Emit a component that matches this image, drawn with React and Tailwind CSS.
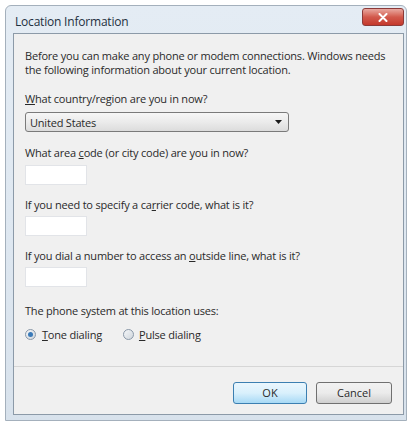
import React from "react";

const font = { fontFamily: '"Open Sans", "Noto Sans", sans-serif' };

function Label({ children, className = "" }) {
  return <div className={"text-[11px] leading-[13px] tracking-[-0.2px] text-[#2a2a2a] whitespace-nowrap " + className}>{children}</div>;
}

function Field({ className = "" }) {
  return <div className={"w-[62px] h-[20px] bg-white border border-[#e2e4e8] " + className} />;
}

function Radio({ checked }) {
  return (
    <div className="w-[11px] h-[11px] rounded-full border border-[#8a98a8] bg-gradient-to-br from-[#f4f6f8] to-[#d0d6dc] flex items-center justify-center">
      {checked && <div className="w-[5px] h-[5px] rounded-full bg-[#3a7ab8]" />}
    </div>
  );
}

export default function App() {
  return (
    <div className="w-[412px] h-[423px] bg-white pt-[5px] pl-[5px]" style={font}>
      <div className="w-[402px] h-[416px] rounded-t-[6px] border border-[#a4b0bc] bg-gradient-to-b from-[#e4ecf4] via-[#dfe8f1] to-[#d8e2ec] flex flex-col">
        <div className="h-[27px] flex items-start justify-between">
          <div className="pl-[9px] pt-[9px] text-[12px] leading-[14px] tracking-[-0.2px] text-[#1e3040] whitespace-nowrap">Location Information</div>
          <div className="mr-[2px] mt-[2px] w-[42px] h-[18px] rounded-[3px] border border-[#8c3a38] bg-gradient-to-b from-[#e8a8a0] via-[#d2594c] to-[#c4382c] flex items-center justify-center">
            <svg width="10" height="9" viewBox="0 0 10 9">
              <path d="M1.5 1 L8.5 8 M8.5 1 L1.5 8" stroke="#ffffff" strokeWidth="2" strokeLinecap="round" />
            </svg>
          </div>
        </div>
        <div className="ml-[7px] mr-[2px] flex-1 mb-[5px] border border-[#8c9aa8] bg-[#f0f0f0] flex flex-col">
          <div className="pl-[11px] pt-[15px] flex flex-col">
            <Label>Before you can make any phone or modem connections. Windows needs</Label>
            <Label className="mt-[1px]">the following information about your current location.</Label>
            <Label className="mt-[16px]"><span className="underline">W</span>hat country/region are you in now?</Label>
            <div className="mt-[7px] w-[264px] h-[20px] rounded-[3px] border border-[#7a7a7a] bg-gradient-to-b from-[#f6f6f6] via-[#ebebeb] to-[#dcdcdc] flex items-center justify-between pl-[4px] pr-[6px]">
              <span className="text-[11px] leading-[13px] tracking-[-0.2px] text-[#2a2a2a]">United States</span>
              <svg width="7" height="4" viewBox="0 0 7 4"><path d="M0 0 H7 L3.5 4 Z" fill="#1a1a1a" /></svg>
            </div>
            <Label className="mt-[14px]">What area <span className="underline">c</span>ode (or city code) are you in now?</Label>
            <Field className="mt-[6px]" />
            <Label className="mt-[13px]">If you need to specify a ca<span className="underline">r</span>rier code, what is it?</Label>
            <Field className="mt-[5px]" />
            <Label className="mt-[13px]">If you dial a number to access an <span className="underline">o</span>utside line, what is it?</Label>
            <Field className="mt-[5px]" />
            <Label className="mt-[17px]">The phone system at this location uses:</Label>
            <div className="mt-[11px] flex items-center h-[13px]">
              <Radio checked />
              <span className="ml-[6px] text-[11px] leading-[13px] tracking-[-0.2px] text-[#2a2a2a]"><span className="underline">T</span>one dialing</span>
              <div className="ml-[21px]"><Radio /></div>
              <span className="ml-[5px] text-[11px] leading-[13px] tracking-[-0.2px] text-[#2a2a2a]"><span className="underline">P</span>ulse dialing</span>
            </div>
          </div>
          <div className="mt-auto border-t border-[#d6d6d6] h-[48px] bg-[#f0f0f0] flex justify-end items-start pt-[15px] pr-[11px] gap-[9px]">
            <button className="w-[74px] h-[22px] rounded-[3px] border border-[#3c7fb1] bg-gradient-to-b from-[#eaf6fd] via-[#d9f0fc] to-[#a7d9f5] text-[11px] text-[#2a2a2a]">OK</button>
            <button className="w-[76px] h-[22px] rounded-[3px] border border-[#707070] bg-gradient-to-b from-[#f2f2f2] via-[#ebebeb] to-[#cfcfcf] text-[11px] text-[#2a2a2a]">Cancel</button>
          </div>
        </div>
      </div>
    </div>
  );
}
